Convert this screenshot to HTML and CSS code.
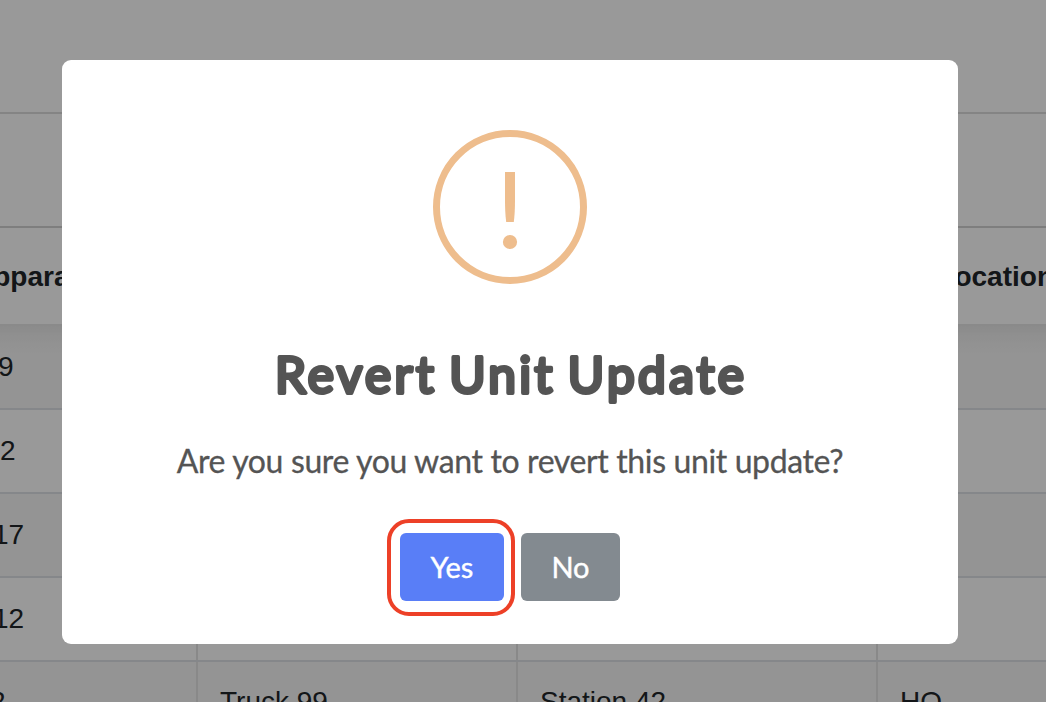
FILE: index.html
```html
<!DOCTYPE html>
<html lang="en">
<head>
  <meta charset="UTF-8" />
  <meta name="viewport" content="width=device-width, initial-scale=1.0"/>
  <title>Revert Unit Update</title>
  <link rel="stylesheet" href="styles.css">
</head>
<body>
  <div class="page">
    <div class="topbar"></div>
    <div class="toolbar"></div>
    <div class="row head">
      <div><span class="cut-head">Apparatus</span></div>
      <div></div>
      <div></div>
      <div>At Location</div>
    </div>
    <div class="rows">
      <div class="row"><div><span class="cut-2">9</span></div><div></div><div></div><div></div></div>
      <div class="row"><div><span>2</span></div><div></div><div></div><div></div></div>
      <div class="row"><div><span class="cut-7">17</span></div><div></div><div></div><div></div></div>
      <div class="row"><div><span class="cut-7">12</span></div><div></div><div></div><div></div></div>
      <div class="row"><div><span class="cut-10">2</span></div><div>Truck 99</div><div>Station 42</div><div>HQ</div></div>
    </div>
  </div>

  <div class="overlay">
    <div class="modal" role="dialog">
      <div class="icon">
        <svg width="20" height="80" viewBox="0 0 20 80">
          <path d="M5 2H15V30Q15 43 13.8 52H6.2Q5 43 5 30Z" />
          <circle cx="10" cy="72" r="7.1" />
        </svg>
      </div>
      <svg class="title" width="500" height="70" role="heading">
        <text x="15" y="51.5" textLength="469" lengthAdjust="spacing">Revert Unit Update</text>
      </svg>
      <p class="message">Are you sure you want to revert this unit update?</p>
      <div class="actions">
        <div class="focus"><button class="btn yes">Yes</button></div>
        <button class="btn no">No</button>
      </div>
    </div>
  </div>
</body>
</html>
```

FILE: styles.css
```css
* {
  box-sizing: border-box;
}

body {
  margin: 0;
  height: 702px;
  overflow: hidden;
  font-family: "Liberation Sans", Arial, sans-serif;
  font-size: 28px;
  color: #212529;
  background: #fff;
}

.page {
  height: 702px;
  overflow: hidden;
}

.topbar {
  height: 114px;
  border-bottom: 2px solid #ddd;
}

.toolbar {
  height: 114px;
  border-bottom: 2px solid #d3d3d3;
}

.row {
  display: grid;
  grid-template-columns: 198px 320px 360px 168px;
  height: 84px;
  border-bottom: 2px solid #dee2e6;
}

.row > div {
  display: flex;
  align-items: center;
  padding-left: 22px;
  border-right: 2px solid #e4e4e4;
  white-space: nowrap;
  overflow: hidden;
}

.row > div:first-child {
  padding-left: 0;
}

.row > div:last-child {
  border-right: 0;
}

.rows .row:nth-child(odd) {
  background: #f7f7f7;
}

.rows .row:last-child > div {
  padding-bottom: 2px;
}

/* shadow under the sticky header */
.rows .row:first-child {
  height: 86px;
  background: linear-gradient(#e6e6e6, #f0f0f0 12px, #f7f7f7 30px);
}

.rows .row:first-child > div {
  padding-top: 2px;
}

.row.head {
  height: 96px;
  border-bottom: 0;
  font-weight: bold;
}

.row.head > div {
  padding-top: 1px;
  border-right: 0;
}

/* first column is scrolled partly out of view */
.row .cut-head { margin-left: -27px; }
.cut-2 { margin-left: -2px; }
.cut-7 { margin-left: -7px; }
.cut-10 { margin-left: -10px; }

.overlay {
  position: absolute;
  inset: 0;
  padding: 60px 88px 58px 62px;
  background: rgba(0, 0, 0, 0.4);
}

.modal {
  height: 584px;
  padding-top: 70px;
  display: flex;
  flex-direction: column;
  align-items: center;
  background: #fff;
  border-radius: 9px;
  font-family: Lato, sans-serif;
  color: #545454;
}

.icon {
  flex: none;
  width: 154px;
  height: 154px;
  display: flex;
  justify-content: center;
  align-items: center;
  border: 7px solid #eebd8d;
  border-radius: 50%;
}

.icon svg {
  fill: #eebd8d;
  margin-top: 6px;
}

.title {
  flex: none;
  margin-top: 57px;
}

/* a wide round stroke on the regular weight gives rounded letter ends */
.title text {
  font-size: 49.5px;
  font-weight: 400;
  word-spacing: -4px;
  fill: #545454;
  stroke: #545454;
  stroke-width: 3.8px;
  stroke-linejoin: round;
}

.message {
  margin: 30px 0 0;
  font-size: 32px;
  line-height: 40px;
  letter-spacing: -0.37px;
  -webkit-text-stroke: 0.3px #545454;
  white-space: nowrap;
}

.actions {
  display: flex;
  align-items: flex-start;
  gap: 6px;
  margin: 38px 13px 0 0;
}

.focus {
  padding: 10px 7px 11px 9px;
  border: 4px solid #ed4027;
  border-radius: 22px;
}

.btn {
  display: block;
  height: 68px;
  padding: 0 0 2px;
  border: 0;
  border-radius: 6px;
  color: #fff;
  font-family: Lato, sans-serif;
  font-size: 29px;
  -webkit-text-stroke: 0.4px #fff;
}

.yes {
  width: 104px;
  background: #597ef7;
}

.no {
  width: 99px;
  margin-top: 14px;
  background: #838a90;
}
```
